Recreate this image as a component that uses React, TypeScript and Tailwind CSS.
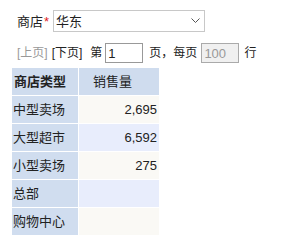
import React from "react";

const rows: [string, string, string][] = [
  ["中型卖场", "2,695", "bg-[#faf9f5]"],
  ["大型超市", "6,592", "bg-[#e8edfc]"],
  ["小型卖场", "275", "bg-[#faf9f5]"],
  ["总部", "", "bg-[#e8edfc]"],
  ["购物中心", "", "bg-[#faf9f5]"],
];

export default function App() {
  const font = { fontFamily: '"Liberation Sans", "Noto Sans CJK SC", sans-serif' };
  return (
    <div className="w-[306px] h-[249px] bg-white text-[13px] text-[#222] pt-[10px]" style={font}>
      <div className="flex items-center h-[22px] pl-[17px]">
        <span className="leading-none">商店</span>
        <span className="text-[#e02020] leading-none ml-[1px] mr-[4px]">*</span>
        <div className="w-[152px] h-[22px] border border-[#c8c8c8] flex items-center justify-between pl-[2px] pr-[4px]">
          <span className="leading-none">华东</span>
          <svg width="9" height="6" viewBox="0 0 9 6">
            <polyline points="0.5,0.5 4.5,4.5 8.5,0.5" fill="none" stroke="#555" strokeWidth="1" />
          </svg>
        </div>
      </div>
      <div className="flex items-center h-[20px] mt-[11px] pl-[17px] leading-none text-[12px]">
        <span className="text-[#999]">[上页]</span>
        <span className="ml-[4px]">[下页]</span>
        <span className="ml-[8px]">第</span>
        <div className="ml-[3px] w-[38px] h-[20px] border border-[#999] flex items-center pl-[2px] text-[13px]">1</div>
        <span className="ml-[6px]">页，每页</span>
        <div className="ml-[4px] w-[38px] h-[20px] border border-[#aaa] bg-[#f0f0f0] text-[#999] flex items-center pl-[2px] text-[13px]">100</div>
        <span className="ml-[5px]">行</span>
      </div>
      <div className="ml-[12px] mt-[5px] grid grid-cols-[66px_80px] gap-px w-fit">
        <div className="h-[27px] bg-[#cfdcee] flex items-center pl-[2px] font-bold">商店类型</div>
        <div className="h-[27px] bg-[#cfdcee] flex items-center pl-[14px]">销售量</div>
        {rows.map(([name, v, bg]) => (
          <React.Fragment key={name}>
            <div className="h-[27px] bg-[#d0ddef] flex items-center pl-[1px]">{name}</div>
            <div className={`h-[27px] ${bg} flex items-center justify-end pr-[2px]`}>{v}</div>
          </React.Fragment>
        ))}
      </div>
    </div>
  );
}
